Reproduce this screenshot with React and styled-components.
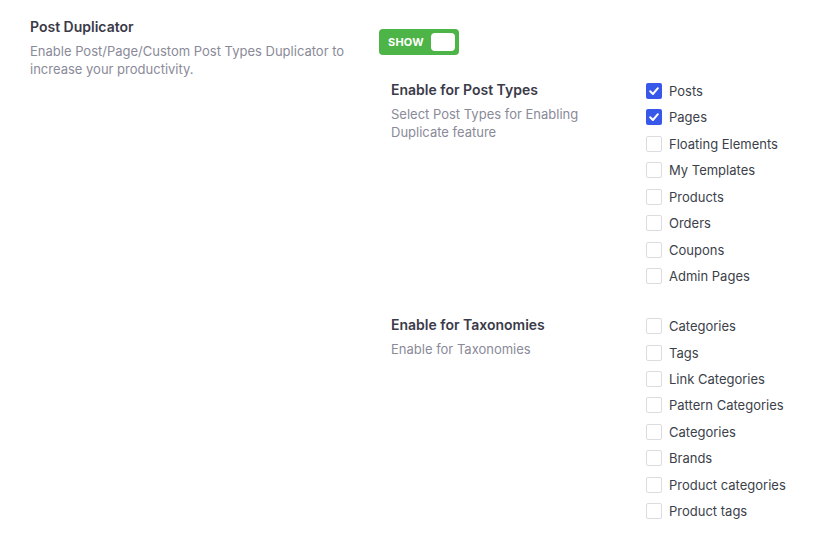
import React from 'react';
import styled, { createGlobalStyle } from 'styled-components';

const GlobalStyle = createGlobalStyle`
  body {
    margin: 0;
    background: #fff;
    font-family: Inter, "Noto Sans", sans-serif;
    -webkit-font-smoothing: antialiased;
  }
`

const Page = styled.div`
  display: flex;
  padding: 18px 30px 0 30px;
`

const Intro = styled.div`
  width: 349px;
`

const Title = styled.h3`
  margin: 0;
  font-size: 14px;
  line-height: 18px;
  font-weight: 600;
  color: #3a3a48;
`

const Desc = styled.p`
  margin: ${p => p.$top || 6}px 0 0 0;
  font-size: 13px;
  line-height: 18px;
  color: #8a8a99;
  max-width: ${p => p.$max || 320}px;
`

const Settings = styled.div`
  display: flex;
  flex-direction: column;
`

const Toggle = styled.div`
  display: flex;
  align-items: center;
  justify-content: space-between;
  width: 80px;
  height: 26px;
  box-sizing: border-box;
  margin-top: 11px;
  padding: 0 4px 0 9px;
  border-radius: 4px;
  background: #4db447;
  color: #fff;
  font-size: 11px;
  font-weight: 700;
  letter-spacing: 0.2px;
`

const Knob = styled.span`
  width: 24px;
  height: 18px;
  border-radius: 4px;
  background: #fff;
`

const Group = styled.div`
  display: flex;
  margin-top: ${p => p.$top}px;
  padding-left: 12px;
`

const GroupInfo = styled.div`
  width: 255px;
  padding-top: 1px;
`

const List = styled.ul`
  list-style: none;
  margin: 0;
  padding: 2px 0 0 0;
  display: flex;
  flex-direction: column;
  gap: 8.45px;
`

const Item = styled.li`
  display: flex;
  align-items: center;
  gap: 7px;
  height: 18px;
  font-size: 13px;
  color: #3c3f4a;
`

const Box = styled.span`
  width: 16px;
  height: 16px;
  box-sizing: border-box;
  border-radius: 2px;
  display: flex;
  align-items: center;
  justify-content: center;
  border: ${p => (p.$on ? 'none' : '1px solid #dcdce0')};
  background: ${p => (p.$on ? '#3858e9' : '#fff')};
`

const Check = () => (
  <svg width="12" height="12" viewBox="0 0 12 12">
    <path d="M2.2 6.3 L4.9 9 L9.9 3.2" fill="none" stroke="#fff" strokeWidth="2" strokeLinecap="round" strokeLinejoin="round" />
  </svg>
)

const postTypes = [
  ['Posts', true],
  ['Pages', true],
  ['Floating Elements', false],
  ['My Templates', false],
  ['Products', false],
  ['Orders', false],
  ['Coupons', false],
  ['Admin Pages', false],
]

const taxonomies = [
  'Categories',
  'Tags',
  'Link Categories',
  'Pattern Categories',
  'Categories',
  'Brands',
  'Product categories',
  'Product tags',
]

function CheckList({ items }) {
  return (
    <List>
      {items.map(([label, on], i) => (
        <Item key={i}>
          <Box $on={on}>{on && <Check />}</Box>
          {label}
        </Item>
      ))}
    </List>
  )
}

export default function App() {
  return (
    <>
      <GlobalStyle />
      <Page>
        <Intro>
          <Title>Post Duplicator</Title>
          <Desc>Enable Post/Page/Custom Post Types Duplicator to increase your productivity.</Desc>
        </Intro>
        <Settings>
          <Toggle>
            SHOW
            <Knob />
          </Toggle>
          <Group $top={25}>
            <GroupInfo>
              <Title>Enable for Post Types</Title>
              <Desc $max={200}>Select Post Types for Enabling Duplicate feature</Desc>
            </GroupInfo>
            <CheckList items={postTypes} />
          </Group>
          <Group $top={30}>
            <GroupInfo>
              <Title>Enable for Taxonomies</Title>
              <Desc $max={200}>Enable for Taxonomies</Desc>
            </GroupInfo>
            <CheckList items={taxonomies.map(t => [t, false])} />
          </Group>
        </Settings>
      </Page>
    </>
  )
}
